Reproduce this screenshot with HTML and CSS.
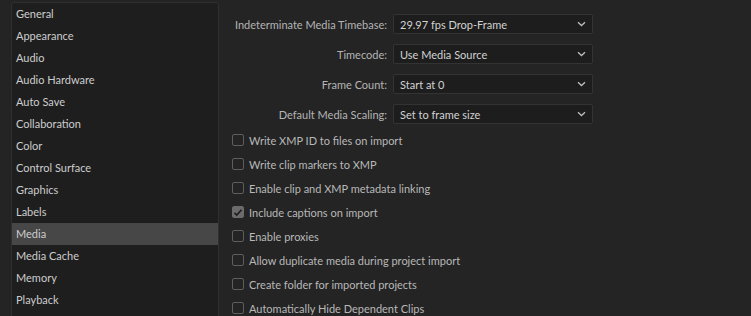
FILE: index.html
```html
<!DOCTYPE html>
<html>
<head>
<meta charset="utf-8">
<link rel="stylesheet" href="styles.css">
</head>
<body>
<div class="app">
  <div class="sidebar">
    <div class="item">General</div>
    <div class="item">Appearance</div>
    <div class="item">Audio</div>
    <div class="item">Audio Hardware</div>
    <div class="item">Auto Save</div>
    <div class="item">Collaboration</div>
    <div class="item">Color</div>
    <div class="item">Control Surface</div>
    <div class="item">Graphics</div>
    <div class="item">Labels</div>
    <div class="item selected">Media</div>
    <div class="item">Media Cache</div>
    <div class="item">Memory</div>
    <div class="item">Playback</div>
  </div>
  <div class="content">
    <div class="form">
      <div class="label">Indeterminate Media Timebase:</div>
      <div class="select"><span>29.97 fps Drop-Frame</span><svg class="chev" width="9" height="6" viewBox="0 0 9 6"><path d="M1 1.2 L4.5 4.5 L8 1.2" fill="none" stroke="#bdbdbd" stroke-width="1.3"/></svg></div>
      <div class="label">Timecode:</div>
      <div class="select"><span>Use Media Source</span><svg class="chev" width="9" height="6" viewBox="0 0 9 6"><path d="M1 1.2 L4.5 4.5 L8 1.2" fill="none" stroke="#bdbdbd" stroke-width="1.3"/></svg></div>
      <div class="label">Frame Count:</div>
      <div class="select"><span>Start at 0</span><svg class="chev" width="9" height="6" viewBox="0 0 9 6"><path d="M1 1.2 L4.5 4.5 L8 1.2" fill="none" stroke="#bdbdbd" stroke-width="1.3"/></svg></div>
      <div class="label">Default Media Scaling:</div>
      <div class="select"><span>Set to frame size</span><svg class="chev" width="9" height="6" viewBox="0 0 9 6"><path d="M1 1.2 L4.5 4.5 L8 1.2" fill="none" stroke="#bdbdbd" stroke-width="1.3"/></svg></div>
    </div>
    <div class="checks">
      <div class="check"><span class="box"></span>Write XMP ID to files on import</div>
      <div class="check"><span class="box"></span>Write clip markers to XMP</div>
      <div class="check"><span class="box"></span>Enable clip and XMP metadata linking</div>
      <div class="check"><span class="box on"><svg width="10" height="9" viewBox="0 0 10 9"><path d="M1.5 4.8 L3.8 7 L8.5 1.8" fill="none" stroke="#1e1e1e" stroke-width="1.7"/></svg></span>Include captions on import</div>
      <div class="check"><span class="box"></span>Enable proxies</div>
      <div class="check"><span class="box"></span>Allow duplicate media during project import</div>
      <div class="check"><span class="box"></span>Create folder for imported projects</div>
      <div class="check"><span class="box"></span>Automatically Hide Dependent Clips</div>
    </div>
  </div>
</div>
</body>
</html>
```
FILE: styles.css
```css
html, body {
  margin: 0;
  padding: 0;
  background: #242424;
  height: 100%;
  overflow: hidden;
}
body {
  font-family: Lato, "Open Sans", sans-serif;
  font-size: 11px;
  color: #c4c4c4;
}
.app {
  display: flex;
  padding: 2px 0 0 11px;
  gap: 12px;
}
.sidebar {
  width: 206px;
  height: 340px;
  background: #1e1e1e;
  border: 1px solid #2f2f2f;
  border-radius: 3px;
  flex-shrink: 0;
}
.item {
  height: 22px;
  line-height: 22px;
  padding-left: 4px;
  color: #cdcdcd;
  white-space: nowrap;
}
.item.selected {
  background: #474747;
}
.content {
  display: flex;
  flex-direction: column;
}
.form {
  display: grid;
  grid-template-columns: 156px 200px;
  column-gap: 6px;
  row-gap: 10px;
  padding-top: 12px;
  align-items: center;
}
.label {
  text-align: right;
  color: #b4b4b4;
  white-space: nowrap;
}
.select {
  height: 18px;
  background: #1d1d1d;
  border: 1px solid #333333;
  border-radius: 2px;
  display: flex;
  align-items: center;
  justify-content: space-between;
  padding: 0 6px 0 6px;
  color: #d2d2d2;
}
.chev {
  display: block;
}
.checks {
  padding-top: 4px;
}
.check {
  height: 24px;
  display: flex;
  align-items: center;
  color: #b8b8b8;
  white-space: nowrap;
}
.box {
  width: 10px;
  height: 10px;
  border: 1.5px solid #5e5e5e;
  border-radius: 2px;
  margin: 0 5px 0 1px;
  display: flex;
  align-items: center;
  justify-content: center;
}
.box.on {
  background: #6b6b6b;
  border-color: #6b6b6b;
}
```
